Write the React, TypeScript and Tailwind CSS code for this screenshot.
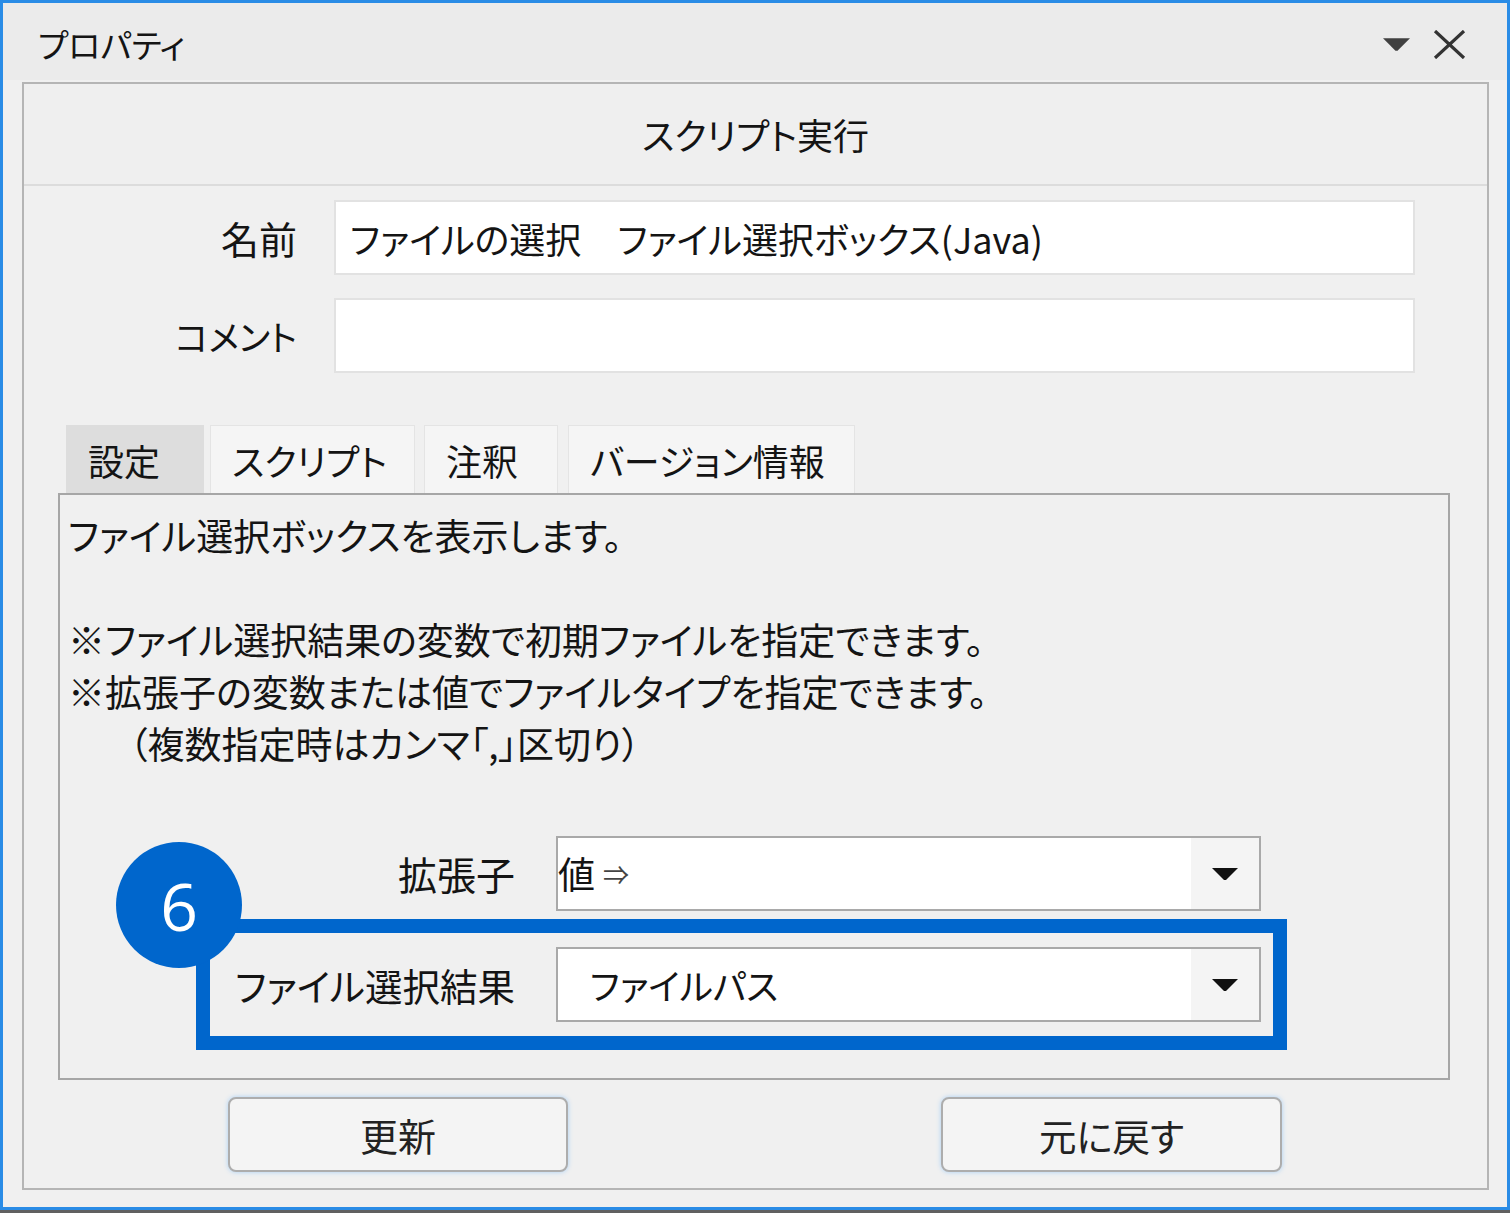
import React from "react";

function Caret({ w, h, color }: { w: number; h: number; color: string }) {
  return (
    <svg width={w} height={h} viewBox="0 0 26 12" className="block">
      <path d="M0 0 H26 L14 12 H12 Z" fill={color} />
    </svg>
  );
}

function Combo({ children }: { children: React.ReactNode }) {
  return (
    <div className="w-[705px] h-[75px] border-2 border-[#a9a9a9] bg-white flex items-stretch">
      <div className="flex-1 flex items-center overflow-hidden">{children}</div>
      <div className="w-[68px] bg-[#f4f4f4] flex items-center justify-center">
        <Caret w={26} h={12} color="#111" />
      </div>
    </div>
  );
}

export default function App() {
  const tabs = [
    { label: "設定", w: "w-[138px]", sel: true, ml: "ml-0" },
    { label: "スクリプト", w: "w-[205px]", sel: false, ml: "ml-[6px]" },
    { label: "注釈", w: "w-[134px]", sel: false, ml: "ml-[9px]" },
    { label: "バージョン情報", w: "w-[287px]", sel: false, ml: "ml-[10px]" },
  ];
  return (
    <div className="w-[1510px] h-[1213px] bg-[#606060] font-['Noto_Sans_CJK_JP','Noto_Sans',sans-serif] text-[#141414] [font-feature-settings:'palt']">
      <div className="w-[1510px] h-[1210px] border-[3px] border-[#2a8ce6] bg-[#f0f0f0] flex flex-col">
        {/* title bar */}
        <div className="h-[77px] shrink-0 bg-[#ebebeb] flex items-center pl-[35px] pr-[41px] pt-[6px]">
          <span className="text-[33px] leading-none">プロパティ</span>
          <div className="ml-auto flex items-center gap-[23px]">
            <Caret w={27} h={13} color="#404040" />
            <svg width="33" height="29" viewBox="0 0 33 29" className="block">
              <path d="M2 1 L31 28 M31 1 L2 28" stroke="#333" strokeWidth="3.2" fill="none" />
            </svg>
          </div>
        </div>
        {/* body */}
        <div className="flex-1 pt-[2px] pl-[19px] pr-[18px] pb-[17px] flex">
          <div className="flex-1 border-2 border-[#b5b5b5] bg-[#f0f0f0] flex flex-col">
            {/* header */}
            <div className="h-[102px] shrink-0 border-b-2 border-[#dcdcdc] bg-[#efefef] flex items-center justify-center">
              <span className="text-[36px] leading-none">スクリプト実行</span>
            </div>
            {/* name / comment */}
            <div className="mt-[14px] grid grid-cols-[273px_1081px] gap-x-[37px] gap-y-[23px] items-center">
              <div className="text-right text-[38px] leading-none">名前</div>
              <div className="h-[75px] bg-white border-2 border-[#e2e2e2] flex items-center pl-[14px] text-[36px] leading-none">
                ファイルの選択　ファイル選択ボックス(Java)
              </div>
              <div className="text-right text-[35px] leading-none">コメント</div>
              <div className="h-[75px] bg-white border-2 border-[#e2e2e2]" />
            </div>
            {/* tabs */}
            <div className="mt-[52px] ml-[42px] flex h-[68px] shrink-0">
              {tabs.map((t) => (
                <div
                  key={t.label}
                  className={`${t.w} ${t.ml} h-[68px] flex items-center pl-[21px] text-[36px] leading-none border border-b-0 ${
                    t.sel ? "bg-[#dddddd] border-[#dddddd]" : "bg-[#f5f5f5] border-[#e4e4e4]"
                  }`}
                >
                  {t.label}
                </div>
              ))}
            </div>
            {/* tab panel */}
            <div className="ml-[34px] w-[1392px] h-[587px] shrink-0 border-2 border-[#a6a6a6] bg-[#f0f0f0] relative">
              <div className="pt-[14px] pl-[8px] text-[37px] leading-[52px]">
                <div>ファイル選択ボックスを表示します。</div>
                <div>&nbsp;</div>
                <div>※ファイル選択結果の変数で初期ファイルを指定できます。</div>
                <div>※拡張子の変数または値でファイルタイプを指定できます。</div>
                <div className="pl-[24px]">　（複数指定時はカンマ「,」区切り）</div>
              </div>
              <div className="mt-[67px] grid grid-cols-[455px_705px] gap-x-[41px] gap-y-[36px] items-center">
                <div className="text-right text-[39px] leading-none">拡張子</div>
                <Combo>
                  <span className="text-[37px] leading-none">値</span>
                  <span className="text-[26px] leading-none text-[#444] ml-[8px]">⇒</span>
                </Combo>
                <div className="text-right text-[37.5px] leading-none">ファイル選択結果</div>
                <Combo>
                  <span className="pl-[32px] text-[35.5px] leading-none">ファイルパス</span>
                </Combo>
              </div>
              {/* highlight overlay */}
              <div className="absolute left-[136px] top-[424px] w-[1091px] h-[131px] border-[14px] border-[#0066cc]" />
              <div className="absolute left-[56px] top-[347px] w-[126px] h-[126px] rounded-full bg-[#0066cc] flex items-center justify-center">
                <span className="text-white text-[66px] leading-none font-['Open_Sans',sans-serif] font-medium">6</span>
              </div>
            </div>
            {/* buttons */}
            <div className="mt-[17px] flex">
              <button className="ml-[204px] w-[340px] h-[75px] rounded-[8px] border-2 border-[#adadad] bg-[#f4f4f4] shadow-[0_0_5px_#a9d0f5] text-[38px] leading-none text-[#222]">
                更新
              </button>
              <button className="ml-[373px] w-[341px] h-[75px] rounded-[8px] border-2 border-[#adadad] bg-[#f4f4f4] shadow-[0_0_5px_#a9d0f5] text-[37.5px] leading-none text-[#222]">
                元に戻す
              </button>
            </div>
          </div>
        </div>
      </div>
    </div>
  );
}
